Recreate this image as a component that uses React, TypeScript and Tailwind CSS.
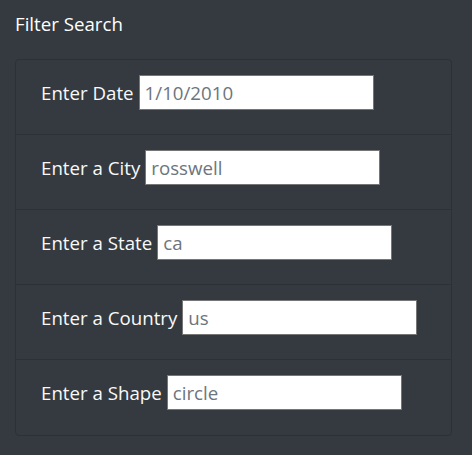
const rows = [
  { label: "Enter Date", value: "1/10/2010" },
  { label: "Enter a City", value: "rosswell" },
  { label: "Enter a State", value: "ca" },
  { label: "Enter a Country", value: "us" },
  { label: "Enter a Shape", value: "circle" },
]

export default function App() {
  return (
    <div
      className="min-h-[455px] w-[472px] bg-[#343a40] pt-[10px] text-white"
      style={{ fontFamily: '"Open Sans", "Noto Sans", sans-serif' }}
    >
      <h2 className="ml-[15px] h-[49px] text-[18.7px] leading-[28px]">Filter Search</h2>
      <ul className="ml-[15px] w-[437px] rounded-[4px] border border-[#2c3136]">
        {rows.map((row, i) => (
          <li
            key={row.label}
            className={
              "flex h-[75px] items-start px-[25px] pt-[15px] " +
              (i < rows.length - 1 ? "border-b border-[#2c3136]" : "h-[74px]")
            }
          >
            <label className="text-[18.7px] leading-[35px] text-[#f8f9fa]">{row.label}</label>
            <input
              className="ml-[5px] h-[35px] w-[235px] border border-[#767676] bg-white px-[5px] text-[18.7px] text-[#6c757d] outline-none"
              defaultValue={row.value}
            />
          </li>
        ))}
      </ul>
    </div>
  )
}
